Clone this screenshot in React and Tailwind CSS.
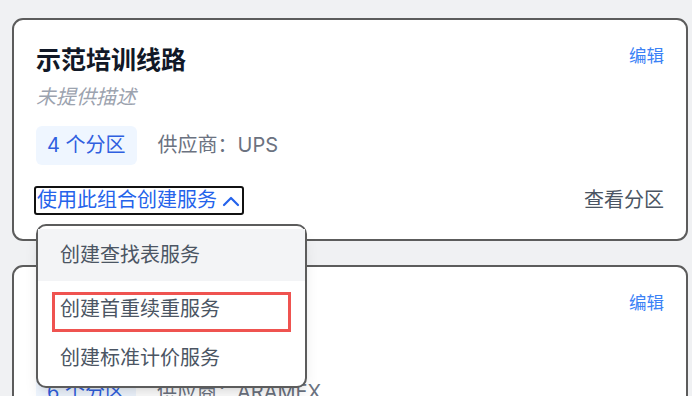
import React from 'react';

const font = { fontFamily: 'Inter, "Noto Sans CJK SC", sans-serif' };

const Chevron = () => (
  <svg width="18" height="12" viewBox="0 0 18 12" fill="none" stroke="currentColor" strokeWidth="2.2" strokeLinecap="round" strokeLinejoin="round">
    <path d="M2 10 L9 3 L16 10" />
  </svg>
);

const RouteCard = ({ title, zones, carrier, children }) => (
  <div className="relative rounded-[11px] border-2 border-[#5c5c5c] bg-white pl-[22px] pr-[22px] pt-[23px] pb-[24px]">
    <div className="flex items-start justify-between">
      <div>
        <h3 className="text-[25px] leading-[35px] font-bold text-[#111827]">{title}</h3>
        <p className="mt-[4px] text-[20px] leading-[30px] italic text-[#9ca3af]">未提供描述</p>
      </div>
      <button className="mt-[1px] text-[17.5px] leading-[24px] text-[#3b82f6]">编辑</button>
    </div>

    <div className="mt-[14px] flex items-center gap-[21px]">
      <span className="rounded-[6px] bg-[#eff6ff] px-[11px] py-[5px] text-[20px] leading-[29px] text-[#2f5fe0]">
        {zones} 个分区
      </span>
      <span className="text-[20px] leading-[29px] text-[#6b7280]">供应商：{carrier}</span>
    </div>

    {children}
  </div>
);

export default function App() {
  return (
    <div className="h-[396px] bg-[#f0f1f3] pl-[12px] pr-[4px] pt-[18px] overflow-hidden" style={font}>
      <div className="relative">
        <RouteCard title="示范培训线路" zones={4} carrier="UPS">
          <div className="mt-[21px] flex items-center justify-between">
            <button className="-ml-[2px] flex items-center gap-[5px] rounded-[3px] border-2 border-[#111] pl-px pr-[2px] text-[20px] leading-[25px] text-[#2563eb]">
              使用此组合创建服务
              <Chevron />
            </button>
            <span className="text-[20px] leading-[25px] text-[#4b5563]">查看分区</span>
          </div>
        </RouteCard>

        {/* dropdown menu */}
        <div className="absolute left-[24px] top-[206px] z-10 w-[271px] rounded-[10px] border-2 border-[#5c5c5c] bg-white py-[3px] shadow-lg">
          <div className="flex h-[52px] items-center bg-[#f3f4f6] px-[22px] text-[20px] text-[#4b5563]">创建查找表服务</div>
          <div className="relative flex h-[51px] items-center px-[22px] pt-[4px] text-[20px] text-[#4b5563]">
            创建首重续重服务
            <div className="absolute left-[14px] top-[11px] h-[40px] w-[239px] border-[3px] border-[#ef5350]"></div>
          </div>
          <div className="flex h-[51px] items-center px-[22px] text-[20px] text-[#4b5563]">创建标准计价服务</div>
        </div>

        <div className="mt-[24px]">
          <RouteCard title="中东专线" zones={6} carrier="ARAMEX" />
        </div>
      </div>
    </div>
  );
}
